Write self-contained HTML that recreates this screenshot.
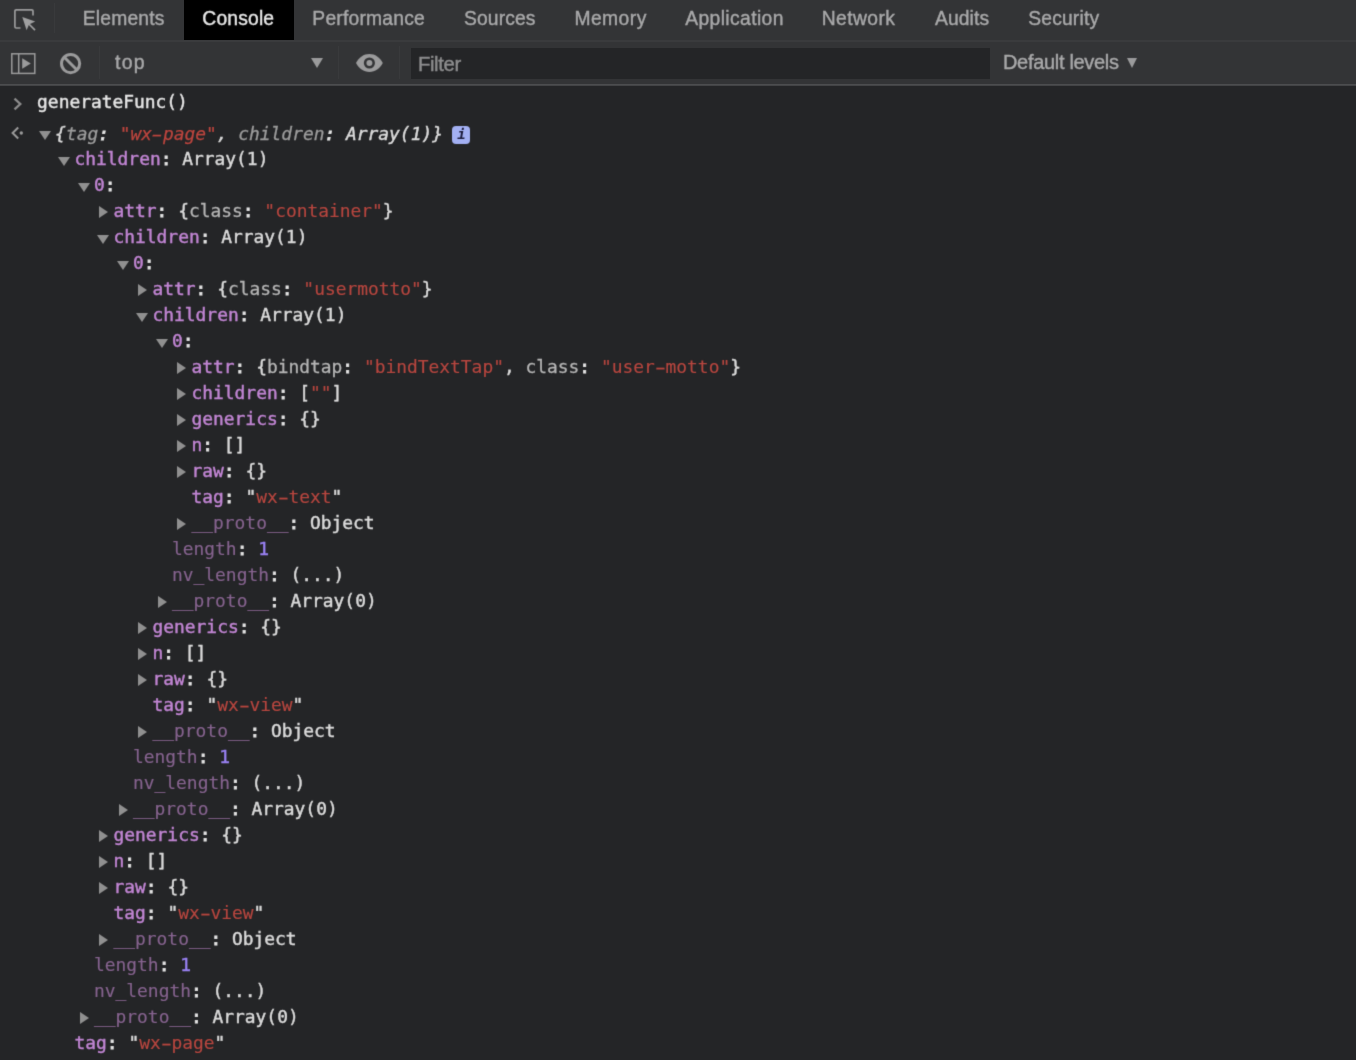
<!DOCTYPE html>
<html lang="en"><head><meta charset="utf-8"><title>DevTools Console</title>
<style>
*{box-sizing:border-box}
html,body{margin:0;padding:0}
body{width:1356px;height:1060px;overflow:hidden;background:#242527;position:relative;font-family:"Liberation Sans",sans-serif}
#bg,#fg{position:absolute;left:0;top:0;width:1356px;height:1060px;overflow:hidden}
#fg{filter:url(#soft)}
#tabs{position:absolute;left:0;top:0;width:1356px;height:40px;background:#333436}
#tabsep{position:absolute;left:0;top:40px;width:1356px;height:2px;background:#3a3b3d}
#tool{position:absolute;left:0;top:42px;width:1356px;height:42px;background:#333436}
#toolsep{position:absolute;left:0;top:84px;width:1356px;height:2px;background:linear-gradient(#4c4d4f 0,#4c4d4f 55%,#38393b 100%)}
#sel{position:absolute;left:183.6px;top:0;width:110.4px;height:40px;background:#000}
#filter{position:absolute;left:411px;top:48px;width:579px;height:31px;background:#242527}
.vd{position:absolute;width:1px;background:#393a3c}
.t{position:absolute;height:20px;line-height:20px;font-size:19.0px;color:#a9a9aa;white-space:pre;-webkit-text-stroke:0.4px}
svg{position:absolute;overflow:visible}
.row{position:absolute;height:26px;line-height:26px;font-family:"DejaVu Sans Mono","Liberation Mono",monospace;font-size:17.9px;letter-spacing:0.000px;color:#dbdbdb;white-space:pre;-webkit-text-stroke:0.45px}
.n{color:#c185d3}
.d{color:#86638f;-webkit-text-stroke:0.15px}
.c{color:#e4e4e4;-webkit-text-stroke:0.8px}
.s{color:#b8463f;-webkit-text-stroke:0.15px}
.v{color:#dbdbdb}
.num{color:#9a82f5}
.arr{position:absolute;width:0;height:0}
.ar{border-left:9px solid #909090;border-top:6.2px solid transparent;border-bottom:6.2px solid transparent}
.ad{border-top:9.2px solid #909090;border-left:6.1px solid transparent;border-right:6.1px solid transparent}
.it{font-style:italic}
.pv{color:#b6b6b6;-webkit-text-stroke:0.3px}
.pn{color:#9d9d9d;-webkit-text-stroke:0.3px}
.hy{display:inline-block;transform:scaleX(1.75)}
.s2{color:#bd453e;-webkit-text-stroke:0.25px}
</style></head>
<body>
<svg width="0" height="0" style="position:absolute"><filter id="soft" x="0" y="0" width="100%" height="100%" color-interpolation-filters="sRGB"><feConvolveMatrix order="3" kernelMatrix="0.0169 0.0962 0.0169 0.0962 0.5476 0.0962 0.0169 0.0962 0.0169" divisor="1" edgeMode="duplicate" preserveAlpha="false"/></filter></svg>
<div id="bg">
<div id="tabs"></div><div id="tabsep"></div><div id="tool"></div><div id="toolsep"></div>
<div id="sel"></div>
<div id="filter"></div>
<div class="vd" style="left:53.7px;top:3px;height:30px"></div><div class="vd" style="left:99.2px;top:46px;height:33px"></div><div class="vd" style="left:337.8px;top:46px;height:33px"></div><div class="vd" style="left:398.5px;top:46px;height:33px"></div>
</div>
<div id="fg">
<div class="t" style="left:82.85px;top:9.00px;font-size:19.3px;letter-spacing:0.170px">Elements</div>
<div class="t" style="left:202.30px;top:9.00px;font-size:19.3px;letter-spacing:0.170px;color:#e8e8e8">Console</div>
<div class="t" style="left:312.35px;top:9.00px;font-size:19.3px;letter-spacing:0.205px">Performance</div>
<div class="t" style="left:464.05px;top:9.00px;font-size:19.3px;letter-spacing:0.121px">Sources</div>
<div class="t" style="left:574.45px;top:9.00px;font-size:19.3px;letter-spacing:0.442px">Memory</div>
<div class="t" style="left:685.25px;top:9.00px;font-size:19.3px;letter-spacing:0.380px">Application</div>
<div class="t" style="left:821.65px;top:9.00px;font-size:19.3px;letter-spacing:0.421px">Network</div>
<div class="t" style="left:934.95px;top:9.00px;font-size:19.3px;letter-spacing:0.110px">Audits</div>
<div class="t" style="left:1028.25px;top:9.00px;font-size:19.3px;letter-spacing:0.169px">Security</div>
<div class="t" style="left:115.05px;top:52.00px;font-size:19.5px;letter-spacing:1.169px">top</div>
<div class="t" style="left:417.95px;top:54.00px;font-size:20.3px;letter-spacing:-0.363px;color:#8e8e8f">Filter</div>
<div class="t" style="left:1002.95px;top:52.00px;font-size:20.0px;letter-spacing:-0.308px">Default levels</div>
<svg style="left:14px;top:9px" width="22" height="22" viewBox="0 0 22 22"><path d="M19 6.5V2.2Q19 0.9 17.7 0.9H2.2Q0.9 0.9 0.9 2.2V17.7Q0.9 19 2.2 19H6.5" fill="none" stroke="#9b9b9c" stroke-width="1.7"/><path d="M8.3 7.9L21.2 12.6L16 14.9L21.6 20.5L20.4 21.7L14.8 16.1L12.6 21.2Z" fill="#a0a0a1"/></svg>
<svg style="left:11px;top:53px" width="25" height="21" viewBox="0 0 25 21"><rect x="0.8" y="0.8" width="23" height="19.6" fill="none" stroke="#9b9b9c" stroke-width="1.5"/><path d="M7.7 0.8V20.2" stroke="#9b9b9c" stroke-width="1.5"/><path d="M11.2 5.2L19.8 10.5L11.2 15.8Z" fill="#9b9b9c"/></svg>
<svg style="left:59.7px;top:52.9px" width="22" height="22" viewBox="0 0 22 22"><circle cx="10.6" cy="10.6" r="9.1" fill="none" stroke="#9b9b9c" stroke-width="3"/><path d="M4.3 4.3L17 17" stroke="#9b9b9c" stroke-width="3"/></svg>
<div class="arr" style="left:311.3px;top:57.6px;border-top:10.5px solid #9b9b9c;border-left:6.2px solid transparent;border-right:6.2px solid transparent"></div>
<svg style="left:355.8px;top:54px" width="26.8" height="18" viewBox="0 0 27 18"><path d="M0 9C3 3.4 7.6 0 13.5 0S24 3.4 27 9C24 14.6 19.4 18 13.5 18S3 14.6 0 9Z" fill="#9b9b9c"/><circle cx="13.5" cy="9" r="5.6" fill="#333436"/><circle cx="13.5" cy="9" r="3" fill="#9b9b9c"/></svg>
<div class="arr" style="left:1126.8px;top:57.7px;border-top:10.2px solid #9b9b9c;border-left:5.8px solid transparent;border-right:5.8px solid transparent"></div>
<svg style="left:13.3px;top:96.6px" width="9" height="14" viewBox="0 0 9 14"><path d="M1.5 1.6L7.3 7L1.5 12.4" fill="none" stroke="#8c8c8c" stroke-width="2.3"/></svg>
<div class="row" style="left:37.1px;top:89.0px;color:#e6e6e6">generateFunc()</div>
<svg style="left:11px;top:126px" width="13" height="14" viewBox="0 0 13 14"><path d="M7.2 1.5L1.6 7L7.2 12.5" fill="none" stroke="#9a9a9a" stroke-width="2"/><circle cx="10.3" cy="7" r="1.7" fill="#9a9a9a"/></svg>
<div class="arr ad" style="left:38.9px;top:130.7px"></div>
<div class="row it" style="left:55.1px;top:121.0px">{<span class="pn">tag</span><span class="c">:</span> <span class="s2">"wx<span class="hy">-</span>page"</span>, <span class="pn">children</span><span class="c">:</span> Array(1)}</div>
<div style="position:absolute;left:451.6px;top:126px;width:18.1px;height:18px;border-radius:4px;background:#a3b0f3;color:#1c1c3c;padding-left:1.5px;font:italic bold 14px/17px 'DejaVu Sans Mono','Liberation Mono',monospace;text-align:center">i</div>
<div class="arr ad" style="left:58.4px;top:157.2px"></div><div class="row" style="left:74.5px;top:146.0px"><span class="n">children</span><span class="c">:</span> <span class="v">Array(1)</span></div>
<div class="arr ad" style="left:77.9px;top:183.2px"></div><div class="row" style="left:94.0px;top:172.0px"><span class="n">0</span><span class="c">:</span></div>
<div class="arr ar" style="left:99.4px;top:206.1px"></div><div class="row" style="left:113.5px;top:198.0px"><span class="n">attr</span><span class="c">:</span> <span class="v">{</span><span class="pv">class</span><span class="c">:</span> <span class="s">"container"</span><span class="v">}</span></div>
<div class="arr ad" style="left:97.4px;top:235.2px"></div><div class="row" style="left:113.5px;top:224.0px"><span class="n">children</span><span class="c">:</span> <span class="v">Array(1)</span></div>
<div class="arr ad" style="left:116.9px;top:261.2px"></div><div class="row" style="left:133.0px;top:250.0px"><span class="n">0</span><span class="c">:</span></div>
<div class="arr ar" style="left:138.4px;top:284.1px"></div><div class="row" style="left:152.5px;top:276.0px"><span class="n">attr</span><span class="c">:</span> <span class="v">{</span><span class="pv">class</span><span class="c">:</span> <span class="s">"usermotto"</span><span class="v">}</span></div>
<div class="arr ad" style="left:136.4px;top:313.2px"></div><div class="row" style="left:152.5px;top:302.0px"><span class="n">children</span><span class="c">:</span> <span class="v">Array(1)</span></div>
<div class="arr ad" style="left:155.9px;top:339.2px"></div><div class="row" style="left:172.0px;top:328.0px"><span class="n">0</span><span class="c">:</span></div>
<div class="arr ar" style="left:177.4px;top:362.1px"></div><div class="row" style="left:191.5px;top:354.0px"><span class="n">attr</span><span class="c">:</span> <span class="v">{</span><span class="pv">bindtap</span><span class="c">:</span> <span class="s">"bindTextTap"</span><span class="v">, </span><span class="pv">class</span><span class="c">:</span> <span class="s">"user<span class="hy">-</span>motto"</span><span class="v">}</span></div>
<div class="arr ar" style="left:177.4px;top:388.1px"></div><div class="row" style="left:191.5px;top:380.0px"><span class="n">children</span><span class="c">:</span> <span class="v">[</span><span class="s">""</span><span class="v">]</span></div>
<div class="arr ar" style="left:177.4px;top:414.1px"></div><div class="row" style="left:191.5px;top:406.0px"><span class="n">generics</span><span class="c">:</span> <span class="v">{}</span></div>
<div class="arr ar" style="left:177.4px;top:440.1px"></div><div class="row" style="left:191.5px;top:432.0px"><span class="n">n</span><span class="c">:</span> <span class="v">[]</span></div>
<div class="arr ar" style="left:177.4px;top:466.1px"></div><div class="row" style="left:191.5px;top:458.0px"><span class="n">raw</span><span class="c">:</span> <span class="v">{}</span></div>
<div class="row" style="left:191.5px;top:484.0px"><span class="n">tag</span><span class="c">:</span> <span class="v">"</span><span class="s">wx<span class="hy">-</span>text</span><span class="v">"</span></div>
<div class="arr ar" style="left:177.4px;top:518.1px"></div><div class="row" style="left:191.5px;top:510.0px"><span class="d">__proto__</span><span class="c">:</span> <span class="v">Object</span></div>
<div class="row" style="left:172.0px;top:536.0px"><span class="d">length</span><span class="c">:</span> <span class="num">1</span></div>
<div class="row" style="left:172.0px;top:562.0px"><span class="d">nv_length</span><span class="c">:</span> <span class="v">(...)</span></div>
<div class="arr ar" style="left:157.9px;top:596.1px"></div><div class="row" style="left:172.0px;top:588.0px"><span class="d">__proto__</span><span class="c">:</span> <span class="v">Array(0)</span></div>
<div class="arr ar" style="left:138.4px;top:622.1px"></div><div class="row" style="left:152.5px;top:614.0px"><span class="n">generics</span><span class="c">:</span> <span class="v">{}</span></div>
<div class="arr ar" style="left:138.4px;top:648.1px"></div><div class="row" style="left:152.5px;top:640.0px"><span class="n">n</span><span class="c">:</span> <span class="v">[]</span></div>
<div class="arr ar" style="left:138.4px;top:674.1px"></div><div class="row" style="left:152.5px;top:666.0px"><span class="n">raw</span><span class="c">:</span> <span class="v">{}</span></div>
<div class="row" style="left:152.5px;top:692.0px"><span class="n">tag</span><span class="c">:</span> <span class="v">"</span><span class="s">wx<span class="hy">-</span>view</span><span class="v">"</span></div>
<div class="arr ar" style="left:138.4px;top:726.1px"></div><div class="row" style="left:152.5px;top:718.0px"><span class="d">__proto__</span><span class="c">:</span> <span class="v">Object</span></div>
<div class="row" style="left:133.0px;top:744.0px"><span class="d">length</span><span class="c">:</span> <span class="num">1</span></div>
<div class="row" style="left:133.0px;top:770.0px"><span class="d">nv_length</span><span class="c">:</span> <span class="v">(...)</span></div>
<div class="arr ar" style="left:118.9px;top:804.1px"></div><div class="row" style="left:133.0px;top:796.0px"><span class="d">__proto__</span><span class="c">:</span> <span class="v">Array(0)</span></div>
<div class="arr ar" style="left:99.4px;top:830.1px"></div><div class="row" style="left:113.5px;top:822.0px"><span class="n">generics</span><span class="c">:</span> <span class="v">{}</span></div>
<div class="arr ar" style="left:99.4px;top:856.1px"></div><div class="row" style="left:113.5px;top:848.0px"><span class="n">n</span><span class="c">:</span> <span class="v">[]</span></div>
<div class="arr ar" style="left:99.4px;top:882.1px"></div><div class="row" style="left:113.5px;top:874.0px"><span class="n">raw</span><span class="c">:</span> <span class="v">{}</span></div>
<div class="row" style="left:113.5px;top:900.0px"><span class="n">tag</span><span class="c">:</span> <span class="v">"</span><span class="s">wx<span class="hy">-</span>view</span><span class="v">"</span></div>
<div class="arr ar" style="left:99.4px;top:934.1px"></div><div class="row" style="left:113.5px;top:926.0px"><span class="d">__proto__</span><span class="c">:</span> <span class="v">Object</span></div>
<div class="row" style="left:94.0px;top:952.0px"><span class="d">length</span><span class="c">:</span> <span class="num">1</span></div>
<div class="row" style="left:94.0px;top:978.0px"><span class="d">nv_length</span><span class="c">:</span> <span class="v">(...)</span></div>
<div class="arr ar" style="left:79.9px;top:1012.1px"></div><div class="row" style="left:94.0px;top:1004.0px"><span class="d">__proto__</span><span class="c">:</span> <span class="v">Array(0)</span></div>
<div class="row" style="left:74.5px;top:1030.0px"><span class="n">tag</span><span class="c">:</span> <span class="v">"</span><span class="s">wx<span class="hy">-</span>page</span><span class="v">"</span></div>
</div>
</body></html>
